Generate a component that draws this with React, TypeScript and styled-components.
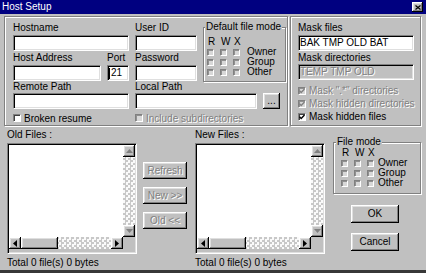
import React from 'react';
import styled, { createGlobalStyle, css } from 'styled-components';

const GlobalStyle = createGlobalStyle`
  * { box-sizing: border-box; }
  html, body { margin: 0; padding: 0; background: #c0c0c0; }
  body {
    font-family: "Liberation Sans", Arial, sans-serif;
    font-size: 10px;
    color: #000;
  }
`;

const sunken = css`
  border: 1px solid;
  border-color: #808080 #fff #fff #808080;
  padding: 1px;
  box-shadow: inset 1px 1px #000, inset -1px -1px #dfdfdf;
`;

const raised = css`
  background: #c0c0c0;
  box-shadow: inset -1px -1px #000, inset 1px 1px #fff, inset -2px -2px #808080, inset 2px 2px #dfdfdf;
`;

const etched = css`
  border: 1px solid #808080;
  box-shadow: inset 1px 1px #fff, 1px 1px #fff;
`;

const dimText = css`
  color: #808080;
  text-shadow: 1px 1px #fff;
`;

const track = css`
  background-color: #f4f4f4;
  background-image: repeating-conic-gradient(#c8c8c8 0 25%, #fafafa 0 50%);
  background-size: 5px 5px;
`;

const Window = styled.div`
  width: 426px;
  height: 273px;
  display: flex;
  flex-direction: column;
  background: #c0c0c0;
  box-shadow: inset 0 -3px #383838;
  overflow: hidden;
`;

const TitleBar = styled.div`
  height: 14px;
  flex: none;
  display: flex;
  align-items: center;
  justify-content: space-between;
  padding: 0 3px 0 2px;
  background: #000080;
`;

const TitleText = styled.span`
  color: #fff;
  font-size: 10px;
  line-height: 14px;
`;

const CloseButton = styled.div`
  ${raised};
  width: 11px;
  height: 10px;
  display: flex;
  align-items: center;
  justify-content: center;
`;

const Body = styled.div`
  display: flex;
  flex-direction: column;
  padding: 2px 0 0 4px;
`;

const TopRow = styled.div`
  display: flex;
  gap: 2px;
  height: 110px;
`;

const Frame = styled.div<{ $width: number; $padLeft: number }>`
  ${etched};
  width: ${(p) => p.$width}px;
  padding: 4px 0 0 ${(p) => p.$padLeft}px;
`;

const FieldsRow = styled.div`
  display: flex;
  gap: 6px;
  height: 60px;
`;

const FieldGrid = styled.div`
  display: grid;
  grid-template-columns: 88px 22px 62px;
  grid-template-rows: 14px 16px 14px 16px;
  column-gap: 6px;
`;

const Label = styled.span<{ $span?: number; $h?: number }>`
  display: block;
  grid-column: span ${(p) => p.$span ?? 1};
  line-height: ${(p) => p.$h ?? 14}px;
  white-space: nowrap;
`;

const TextBox = styled.div<{ $span?: number; $width?: number; $disabled?: boolean }>`
  ${sunken};
  grid-column: span ${(p) => p.$span ?? 1};
  width: ${(p) => (p.$width ? `${p.$width}px` : 'auto')};
  height: 16px;
  padding: 1px 1px;
  display: flex;
  align-items: center;
  background: ${(p) => (p.$disabled ? '#c0c0c0' : '#fff')};
  line-height: 12px;
  white-space: nowrap;
  overflow: hidden;
  ${(p) => p.$disabled && dimText}
`;

const Caret = styled.span`
  width: 1px;
  height: 11px;
  margin-right: 1px;
  background: #000;
`;

const PathGrid = styled.div`
  display: grid;
  grid-template-columns: 116px 122px 17px;
  grid-template-rows: 12px 16px;
  column-gap: 6px;
`;

const CheckGrid = styled.div`
  display: grid;
  grid-template-columns: 116px auto;
  column-gap: 6px;
  margin-top: 3px;
`;

const CheckStack = styled.div`
  display: flex;
  flex-direction: column;
  margin-top: 4px;
`;

const CheckLine = styled.div<{ $dim?: boolean; $h: number }>`
  display: flex;
  align-items: center;
  gap: 3px;
  height: ${(p) => p.$h}px;
  white-space: nowrap;
  ${(p) => p.$dim && dimText}
`;

const Box = styled.span<{ $size: number; $dim?: boolean }>`
  flex: none;
  width: ${(p) => p.$size}px;
  height: ${(p) => p.$size}px;
  border: 1px solid;
  border-color: #808080 #fff #fff #808080;
  box-shadow: inset 1px 1px ${(p) => (p.$dim ? '#909090' : '#404040')};
  background: ${(p) => (p.$dim ? '#d8d8d8' : '#fff')};
  display: flex;
  align-items: center;
  justify-content: center;
`;

const GroupBox = styled.fieldset<{ $width: number; $padLeft: number; $padTop: number; $padBottom: number; $top: number }>`
  ${etched};
  margin: ${(p) => p.$top}px 0 0 0;
  width: ${(p) => p.$width}px;
  min-width: 0;
  padding: ${(p) => p.$padTop}px 0 ${(p) => p.$padBottom}px ${(p) => p.$padLeft}px;
  flex: none;
  align-self: flex-start;
`;

const GroupTitle = styled.legend<{ $shift: number }>`
  margin-left: ${(p) => p.$shift}px;
  padding: 0 1px;
  line-height: 12px;
  background: #c0c0c0;
  white-space: nowrap;
`;

const PermGrid = styled.div<{ $cols: string }>`
  display: grid;
  grid-template-columns: ${(p) => p.$cols};
  grid-auto-rows: 10px;
  align-items: center;
  line-height: 10px;
`;

const PermHead = styled.span`
  padding-left: 1px;
`;

const BottomRow = styled.div`
  display: flex;
  gap: 8px;
  padding-left: 3px;
`;

const FileColumn = styled.div`
  width: 130px;
  display: flex;
  flex-direction: column;
`;

const ColumnLabel = styled.span`
  line-height: 12px;
  margin: 3px 0 2px;
  white-space: nowrap;
`;

const ListFrame = styled.div`
  ${sunken};
  height: 111px;
  background: #fff;
  display: grid;
  grid-template-columns: 1fr 12px;
  grid-template-rows: 1fr 12px 3px;
`;

const ListArea = styled.div`
  background: #fff;
`;

const VScroll = styled.div`
  ${track};
  display: flex;
  flex-direction: column;
  justify-content: space-between;
`;

const HScroll = styled.div`
  ${track};
  display: flex;
`;

const Corner = styled.div`
  background: #c0c0c0;
`;

const Strip = styled.div`
  grid-column: 1 / -1;
  background: #c0c0c0;
`;

const ArrowButton = styled.div`
  ${raised};
  flex: none;
  width: 12px;
  height: 12px;
  display: flex;
  align-items: center;
  justify-content: center;
`;

const Thumb = styled.div`
  ${raised};
  flex: none;
  width: 37px;
  height: 12px;
`;

const Spacer = styled.div`
  flex: 1;
`;

const TotalText = styled.span`
  line-height: 12px;
  margin-top: 3px;
  white-space: nowrap;
`;

const ActionColumn = styled.div`
  width: 44px;
  margin-left: -2px;
  padding-top: 36px;
  display: flex;
  flex-direction: column;
  gap: 8px;
`;

const PushButton = styled.div<{ $width: number; $height: number; $dim?: boolean }>`
  ${raised};
  width: ${(p) => p.$width}px;
  height: ${(p) => p.$height}px;
  display: flex;
  align-items: center;
  justify-content: center;
  line-height: 10px;
  white-space: nowrap;
  ${(p) => p.$dim && dimText}
`;

const SideColumn = styled.div`
  width: 88px;
  display: flex;
  flex-direction: column;
`;

const DialogButtons = styled.div`
  display: flex;
  flex-direction: column;
  gap: 10px;
  margin: 11px 0 0 18px;
`;

type Dir = 'up' | 'down' | 'left' | 'right';

const arrowPoints: Record<Dir, string> = {
  up: '3.5,0 7,4 0,4',
  down: '0,0 7,0 3.5,4',
  left: '4,0 4,7 0,3.5',
  right: '0,0 4,3.5 0,7',
};

const Arrow = ({ dir, dim }: { dir: Dir; dim?: boolean }) => {
  const vertical = dir === 'up' || dir === 'down';
  const w = vertical ? 7 : 4;
  const h = vertical ? 4 : 7;
  return (
    <ArrowButton>
      <svg width={w} height={h} viewBox={`0 0 ${w} ${h}`}>
        <polygon points={arrowPoints[dir]} fill={dim ? '#808080' : '#000'} />
      </svg>
    </ArrowButton>
  );
};

const CheckMark = ({ color }: { color: string }) => (
  <svg width="6" height="6" viewBox="0 0 6 6">
    <path d="M0.5 2.8 L2.2 4.5 L5.5 1" stroke={color} strokeWidth="1.4" fill="none" />
  </svg>
);

const CheckItem = ({ label, dim, checked, h = 12 }: { label: string; dim?: boolean; checked?: boolean; h?: number }) => (
  <CheckLine $dim={dim} $h={h}>
    <Box $size={8} $dim={dim}>{checked && <CheckMark color={dim ? '#808080' : '#000'} />}</Box>
    {label}
  </CheckLine>
);

const permRows = ['Owner', 'Group', 'Other'];

const PermGroup = ({
  title, width, cols, padLeft, padTop, padBottom, top, shift,
}: {
  title: string; width: number; cols: string; padLeft: number; padTop: number; padBottom: number; top: number; shift: number;
}) => (
  <GroupBox $width={width} $padLeft={padLeft} $padTop={padTop} $padBottom={padBottom} $top={top}>
    <GroupTitle $shift={shift}>{title}</GroupTitle>
    <PermGrid $cols={cols}>
      <PermHead>R</PermHead>
      <PermHead>W</PermHead>
      <PermHead>X</PermHead>
      <span />
      {permRows.map((row) => (
        <React.Fragment key={row}>
          <Box $size={7} $dim />
          <Box $size={7} $dim />
          <Box $size={7} $dim />
          <span>{row}</span>
        </React.Fragment>
      ))}
    </PermGrid>
  </GroupBox>
);

const FileList = ({ title }: { title: string }) => (
  <FileColumn>
    <ColumnLabel>{title}</ColumnLabel>
    <ListFrame>
      <ListArea />
      <VScroll>
        <Arrow dir="up" dim />
        <Arrow dir="down" dim />
      </VScroll>
      <HScroll>
        <Arrow dir="left" />
        <Thumb />
        <Spacer />
        <Arrow dir="right" />
      </HScroll>
      <Corner />
      <Strip />
    </ListFrame>
    <TotalText>Total 0 file(s) 0 bytes</TotalText>
  </FileColumn>
);

export default function App() {
  return (
    <>
      <GlobalStyle />
      <Window>
        <TitleBar>
          <TitleText>Host Setup</TitleText>
          <CloseButton>
            <svg width="6" height="5" viewBox="0 0 6 5">
              <path d="M0.5 0.5 L5.5 4.5 M5.5 0.5 L0.5 4.5" stroke="#000" strokeWidth="1.2" />
            </svg>
          </CloseButton>
        </TitleBar>

        <Body>
          <TopRow>
            <Frame $width={284} $padLeft={8}>
              <FieldsRow>
                <FieldGrid>
                  <Label $span={2}>Hostname</Label>
                  <Label>User ID</Label>
                  <TextBox $span={2} />
                  <TextBox />
                  <Label>Host Address</Label>
                  <Label>Port</Label>
                  <Label>Password</Label>
                  <TextBox />
                  <TextBox>
                    <Caret />
                    21
                  </TextBox>
                  <TextBox />
                </FieldGrid>
                <PermGroup
                  title="Default file mode"
                  width={83}
                  cols="13px 13px 14px auto"
                  padLeft={3}
                  padTop={4}
                  padBottom={4}
                  top={0}
                  shift={-2}
                />
              </FieldsRow>
              <PathGrid>
                <Label $h={12}>Remote Path</Label>
                <Label $h={12} $span={2}>Local Path</Label>
                <TextBox />
                <TextBox />
                <PushButton $width={17} $height={16}>...</PushButton>
              </PathGrid>
              <CheckGrid>
                <CheckItem label="Broken resume" />
                <CheckItem label="Include subdirectories" dim />
              </CheckGrid>
            </Frame>

            <Frame $width={131} $padLeft={7}>
              <Label>Mask files</Label>
              <TextBox $width={116}>BAK TMP OLD BAT</TextBox>
              <Label $h={13}>Mask directories</Label>
              <TextBox $width={116} $disabled>TEMP TMP OLD</TextBox>
              <CheckStack>
                <CheckItem label={'Mask ".*" directories'} dim checked h={13} />
                <CheckItem label="Mask hidden directories" dim checked h={13} />
                <CheckItem label="Mask hidden files" checked h={13} />
              </CheckStack>
            </Frame>
          </TopRow>

          <BottomRow>
            <FileList title="Old Files :" />
            <ActionColumn>
              <PushButton $width={44} $height={17} $dim>Refresh</PushButton>
              <PushButton $width={44} $height={17} $dim>New &gt;&gt;</PushButton>
              <PushButton $width={44} $height={17} $dim>Old &lt;&lt;</PushButton>
            </ActionColumn>
            <FileList title="New Files :" />
            <SideColumn>
              <PermGroup
                title="File mode"
                width={88}
                cols="13px 13px 11px auto"
                padLeft={7}
                padTop={0}
                padBottom={5}
                top={10}
                shift={-5}
              />
              <DialogButtons>
                <PushButton $width={48} $height={18}>OK</PushButton>
                <PushButton $width={48} $height={18}>Cancel</PushButton>
              </DialogButtons>
            </SideColumn>
          </BottomRow>
        </Body>
      </Window>
    </>
  );
}
